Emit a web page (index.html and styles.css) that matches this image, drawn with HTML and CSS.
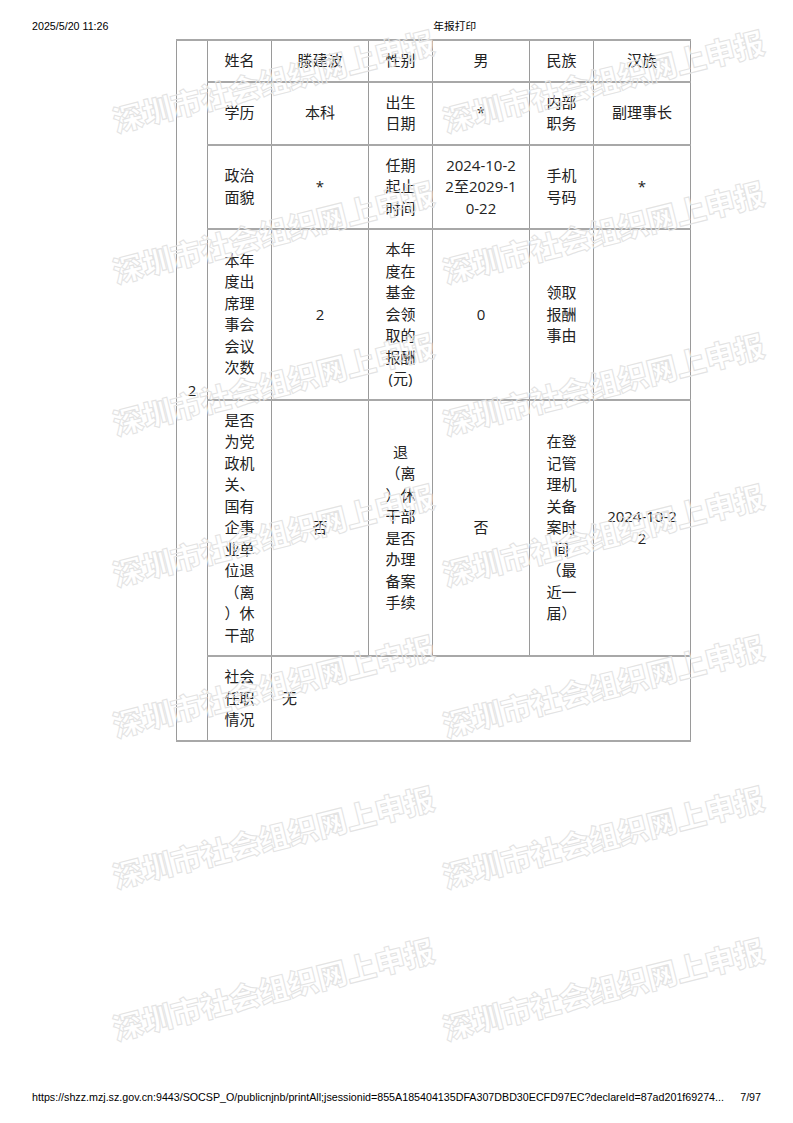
FILE: index.html
```html
<!DOCTYPE html>
<html lang="zh-CN">
<head>
<meta charset="utf-8">
<title>年报打印</title>
<link rel="stylesheet" href="styles.css">
</head>
<body>
<div class="page">
  <header class="print-head">
    <span class="stamp">2025/5/20 11:26</span>
    <span class="doc-title">年报打印</span>
  </header>

  <table class="info">
    <colgroup>
      <col class="c-idx"><col class="c-lab"><col class="c-val"><col class="c-lab"><col class="c-val"><col class="c-lab"><col class="c-val">
    </colgroup>
    <tr>
      <td rowspan="6" class="idx">2</td>
      <td class="lab">姓名</td><td class="v">滕建波</td>
      <td class="lab">性别</td><td class="v">男</td>
      <td class="lab">民族</td><td class="v">汉族</td>
    </tr>
    <tr>
      <td class="lab">学历</td><td class="v">本科</td>
      <td class="lab">出生日期</td><td class="v">*</td>
      <td class="lab">内部职务</td><td class="v">副理事长</td>
    </tr>
    <tr>
      <td class="lab">政治面貌</td><td class="v">*</td>
      <td class="lab">任期起止时间</td><td class="v">2024-10-22至2029-10-22</td>
      <td class="lab">手机号码</td><td class="v">*</td>
    </tr>
    <tr>
      <td class="lab">本年度出席理事会会议次数</td><td class="v">2</td>
      <td class="lab">本年度在基金会领取的报酬(元)</td><td class="v">0</td>
      <td class="lab">领取报酬事由</td><td class="v"></td>
    </tr>
    <tr>
      <td class="lab">是否为党政机关、国有企事业单位退（离）休干部</td><td class="v">否</td>
      <td class="lab">退（离）休干部是否办理备案手续</td><td class="v">否</td>
      <td class="lab">在登记管理机关备案时间（最近一届）</td><td class="v">2024-10-22</td>
    </tr>
    <tr>
      <td class="lab">社会任职情况</td>
      <td class="v left" colspan="5">无</td>
    </tr>
  </table>

  <footer class="print-foot">
    <span class="url">https://shzz.mzj.sz.gov.cn:9443/SOCSP_O/publicnjnb/printAll;jsessionid=855A185404135DFA307DBD30ECFD97EC?declareId=87ad201f69274...</span>
    <span class="pageno">7/97</span>
  </footer>

  <div class="wm-layer" aria-hidden="true">
    <span class="wm">深圳市社会组织网上申报</span><span class="wm">深圳市社会组织网上申报</span>
    <span class="wm">深圳市社会组织网上申报</span><span class="wm">深圳市社会组织网上申报</span>
    <span class="wm">深圳市社会组织网上申报</span><span class="wm">深圳市社会组织网上申报</span>
    <span class="wm">深圳市社会组织网上申报</span><span class="wm">深圳市社会组织网上申报</span>
    <span class="wm">深圳市社会组织网上申报</span><span class="wm">深圳市社会组织网上申报</span>
    <span class="wm">深圳市社会组织网上申报</span><span class="wm">深圳市社会组织网上申报</span>
    <span class="wm">深圳市社会组织网上申报</span><span class="wm">深圳市社会组织网上申报</span>
  </div>
</div>
</body>
</html>
```

FILE: styles.css
```css
html, body {
  margin: 0;
  padding: 0;
  background: #fff;
}

.page {
  position: relative;
  width: 793px;
  height: 1123px;
  display: flex;
  flex-direction: column;
  overflow: hidden;
}

.print-head {
  display: flex;
  align-items: baseline;
  padding: 20px 0 0 32px;
  height: 19px;
  font-family: "Liberation Sans", Arial, sans-serif;
  font-size: 10.7px;
  color: #000;
  line-height: 12px;
}

.print-head .stamp {
  flex: none;
}

.print-head .doc-title {
  flex: 1;
  text-align: center;
  padding-left: 8px;
  font-family: "Noto Sans CJK SC", sans-serif;
}

.info {
  margin-left: 176px;
  border-collapse: collapse;
  table-layout: fixed;
  width: 514px;
  font-family: "Open Sans", "Noto Sans CJK SC", sans-serif;
  font-size: 15px;
  line-height: 21.5px;
  color: #222;
  text-spacing-trim: space-all;
}

.c-idx { width: 31px; }
.c-lab { width: 64px; }
.c-val { width: 97px; }

.info td {
  border-left: 1px solid #9a9a9a;
  border-right: 1px solid #9a9a9a;
  border-top: 2px solid #a8a8a8;
  border-bottom: 2px solid #a8a8a8;
  padding: 9px 11px;
  text-align: center;
  vertical-align: middle;
}

.info td.idx {
  padding: 0;
}

.info td.lab {
  overflow-wrap: anywhere;
  text-spacing-trim: space-all;
}

.info td.v {
  word-break: break-all;
}

.info td.left {
  text-align: left;
  padding-left: 10px;
}

.print-foot {
  margin-top: auto;
  display: flex;
  align-items: baseline;
  justify-content: space-between;
  padding: 0 32px 20px 32px;
  font-family: "Liberation Sans", Arial, sans-serif;
  font-size: 10.7px;
  line-height: 12px;
  color: #000;
}

.print-foot .url {
  white-space: nowrap;
}

.wm-layer {
  position: absolute;
  inset: 0;
  pointer-events: none;
  display: grid;
  grid-template-columns: 330px 330px;
  grid-auto-rows: 151.3px;
  padding: 105px 0 0 113px;
}

.wm {
  display: block;
  width: 330px;
  height: 30px;
  white-space: nowrap;
  font-family: "Noto Sans CJK SC", sans-serif;
  font-weight: 900;
  font-size: 30px;
  line-height: 30px;
  color: rgba(255, 255, 255, 0);
  -webkit-text-stroke: 1px #e3e3e3;
  transform-origin: 0 50%;
  transform: rotate(-14deg);
}
```
